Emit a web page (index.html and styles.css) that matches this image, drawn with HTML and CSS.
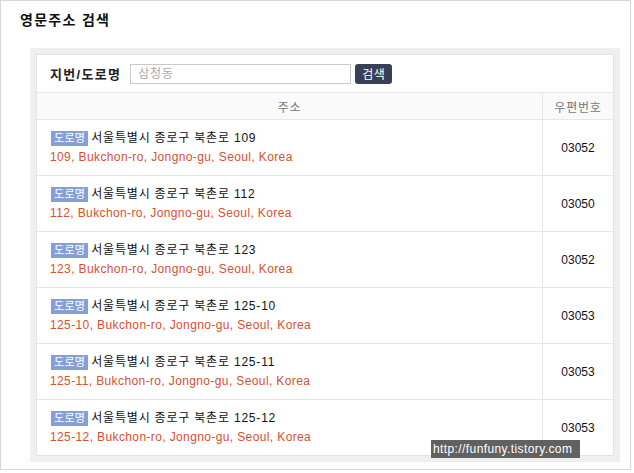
FILE: index.html
```html
<!DOCTYPE html>
<html lang="ko">
<head>
<meta charset="utf-8">
<title>영문주소 검색</title>
<link rel="stylesheet" href="styles.css">
</head>
<body>
<div class="frame">
  <h1 class="title">영문주소 검색</h1>
  <div class="panel">
    <div class="box">
      <div class="search">
        <span class="label">지번/도로명</span>
        <input class="input" type="text" placeholder="삼청동">
        <button class="btn" type="button">검색</button>
      </div>
      <table class="list">
        <thead>
          <tr><th class="col-addr">주소</th><th class="col-zip">우편번호</th></tr>
        </thead>
        <tbody>
          <tr>
            <td class="addr"><div class="ko"><span class="badge">도로명</span>서울특별시 종로구 북촌로 109</div><div class="en">109, Bukchon-ro, Jongno-gu, Seoul, Korea</div></td>
            <td class="zip">03052</td>
          </tr>
          <tr>
            <td class="addr"><div class="ko"><span class="badge">도로명</span>서울특별시 종로구 북촌로 112</div><div class="en">112, Bukchon-ro, Jongno-gu, Seoul, Korea</div></td>
            <td class="zip">03050</td>
          </tr>
          <tr>
            <td class="addr"><div class="ko"><span class="badge">도로명</span>서울특별시 종로구 북촌로 123</div><div class="en">123, Bukchon-ro, Jongno-gu, Seoul, Korea</div></td>
            <td class="zip">03052</td>
          </tr>
          <tr>
            <td class="addr"><div class="ko"><span class="badge">도로명</span>서울특별시 종로구 북촌로 125-10</div><div class="en">125-10, Bukchon-ro, Jongno-gu, Seoul, Korea</div></td>
            <td class="zip">03053</td>
          </tr>
          <tr>
            <td class="addr"><div class="ko"><span class="badge">도로명</span>서울특별시 종로구 북촌로 125-11</div><div class="en">125-11, Bukchon-ro, Jongno-gu, Seoul, Korea</div></td>
            <td class="zip">03053</td>
          </tr>
          <tr>
            <td class="addr"><div class="ko"><span class="badge">도로명</span>서울특별시 종로구 북촌로 125-12</div><div class="en">125-12, Bukchon-ro, Jongno-gu, Seoul, Korea</div></td>
            <td class="zip">03053</td>
          </tr>
        </tbody>
      </table>
    </div>
  </div>
  <div class="watermark">http://funfuny.tistory.com</div>
</div>
</body>
</html>
```
FILE: styles.css
```css
html, body {
  margin: 0;
  padding: 0;
  background: #fff;
}
body {
  font-family: "Liberation Sans", "Noto Sans CJK KR", sans-serif;
  font-size: 12px;
  color: #111;
}
.frame {
  position: relative;
  width: 629px;
  height: 468px;
  border: 1px solid #d6d6d6;
  background: #fff;
}
.title {
  margin: 0;
  padding: 9px 0 0 19px;
  font-size: 14px;
  line-height: 20px;
  font-weight: bold;
  letter-spacing: 1.3px;
  color: #111;
}
.panel {
  margin: 18px 0 0 29px;
  width: 578px;
  border: 6px solid #efefef;
}
.box {
  border: 1px solid #e3e3e3;
  background: #fff;
}
.search {
  display: flex;
  align-items: center;
  height: 37px;
  padding-left: 13px;
}
.label {
  font-size: 13px;
  font-weight: bold;
  letter-spacing: 1.3px;
  color: #222;
}
.input {
  box-sizing: border-box;
  margin: 0 0 0 9px;
  width: 221px;
  height: 20px;
  border: 1px solid #c9c9c9;
  padding: 0 7px;
  font-family: inherit;
  font-size: 12px;
  letter-spacing: 0.8px;
  outline: none;
}
.input::placeholder {
  color: #aaa;
}
.btn {
  box-sizing: border-box;
  margin: 0 0 0 4px;
  width: 37px;
  height: 20px;
  border: 0;
  border-radius: 3px;
  background: #394055;
  color: #fff;
  font-family: inherit;
  font-size: 12px;
  letter-spacing: 0.5px;
  padding: 0;
}
.list {
  width: 100%;
  border-collapse: collapse;
}
.list th {
  height: 26px;
  padding: 0;
  background: #fafafa;
  border-top: 1px solid #e6e6e6;
  border-bottom: 1px solid #e6e6e6;
  font-weight: normal;
  color: #777;
  font-size: 12px;
  letter-spacing: 0.8px;
}
.col-zip {
  width: 70px;
  border-left: 1px solid #e6e6e6;
}
.list td {
  height: 55px;
  padding: 0;
  border-bottom: 1px solid #e8e8e8;
  vertical-align: middle;
}
.list tr:last-child td {
  border-bottom: 0;
}
.addr {
  padding-left: 14px !important;
}
.ko {
  line-height: 19px;
  color: #111;
  letter-spacing: 0.8px;
}
.badge {
  display: inline-block;
  vertical-align: top;
  margin: 2px 3px 0 0;
  padding: 0 3px;
  height: 15px;
  line-height: 15px;
  font-size: 11px;
  letter-spacing: 0.3px;
  background: #86a0d6;
  color: #fff;
}
.en {
  line-height: 19px;
  color: #d35230;
  letter-spacing: 0.38px;
  margin-left: -1px;
}
.zip {
  text-align: center;
  border-left: 1px solid #e6e6e6;
  color: #111;
}
.watermark {
  position: absolute;
  left: 430px;
  top: 439px;
  width: 149px;
  height: 18px;
  line-height: 18px;
  padding-left: 2px;
  box-sizing: border-box;
  background: #616161;
  color: #fff;
  font-size: 12px;
  letter-spacing: 0.4px;
}
```
